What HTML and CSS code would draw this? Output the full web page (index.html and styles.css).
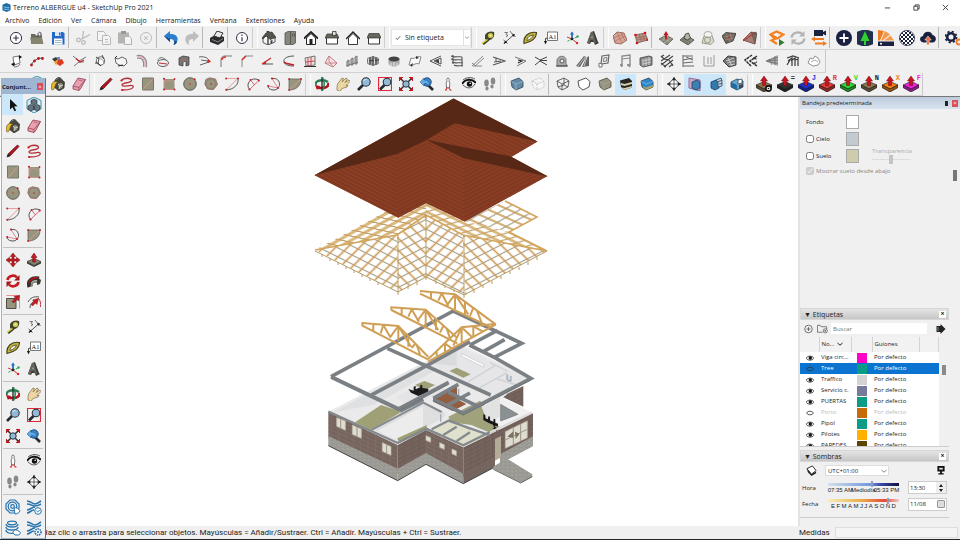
FILE: index.html
```html
<!DOCTYPE html>
<html lang="es">
<head>
    <meta charset="UTF-8">
    <title>Terreno ALBERGUE u4 - SketchUp Pro 2021</title>
    <link rel="stylesheet" href="styles.css">
</head>
<body>
    <!-- Icon set -->
    <svg class="sprite" aria-hidden="true">
        <symbol id="new" viewBox="0 0 14 14"><g fill="none" stroke="#33344a"><circle cx="7" cy="7" r="5.6" fill="#fff"/><path d="M7 4.2v5.6M4.2 7h5.6" stroke-width="1.2"/></g></symbol>
        <symbol id="open" viewBox="0 0 14 14"><path d="M1 3h4l1 1.500h6V13H1z" fill="#69695a"/><path d="M0 6.500h12l1.500 6.500H1.500z" fill="#85856f"/><path d="M8 6V3.500C8 1.500 10 .5 11 2v3" fill="none" stroke="#444"/></symbol>
        <symbol id="save" viewBox="0 0 14 14"><path d="M1 1h11l1.500 1.500V13.500H1z" fill="#2468c8"/><path d="M4 1h6v4H4z" fill="#dce8f8"/><path d="M8 1.500h1.500v3H8z" fill="#2468c8"/><path d="M3 7.500h8.500v6H3z" fill="#fff"/><path d="M4 9.500h6.500M4 11.500h6.500" stroke="#9bb"/></symbol>
        <symbol id="cut" viewBox="0 0 14 14"><g fill="none" stroke="#bcbcbc" stroke-width="1.300"><path d="M7.500 0l-1 8M14 3.500L4 9"/><circle cx="2.500" cy="9" r="1.800"/><circle cx="7.500" cy="11.500" r="1.800"/></g></symbol>
        <symbol id="copy" viewBox="0 0 14 14"><g fill="#f4f4f4" stroke="#b8b8b8"><path d="M.5.5h6l2 2v7h-8z"/><path d="M5.500 4.500h6l2 2v7h-8z"/><path d="M8 8.500h3M8 11h3" /></g></symbol>
        <symbol id="paste" viewBox="0 0 14 14"><path d="M0 1.500h11v11H0z" fill="#b4b4b0"/><path d="M3 0h5v3H3z" fill="#999"/><path d="M6.500 5.500h5l2 2v6h-7z" fill="#f4f4f4" stroke="#b0b0b0"/></symbol>
        <symbol id="del" viewBox="0 0 14 14"><g fill="none" stroke="#bdbdbd"><circle cx="7" cy="7" r="5.500"/><path d="M5 5l4 4M9 5l-4 4"/></g></symbol>
        <symbol id="undo" viewBox="0 0 14 14"><path d="M0 5l6-5v3c6 0 9 3 7 8-.5 1.500-2 2.500-3.500 3 2-4 0-6-3.500-6v3z" fill="#2a7fd0"/><path d="M0 5l6 3v3zM13 11c-.5 1.500-2 2.500-3.500 3 1.500-2.500 1-4 0-5z" fill="#16487c"/></symbol>
        <symbol id="redo" viewBox="0 0 14 14"><path d="M14 5L8 0v3C2 3-1 6 1 11c.5 1.500 2 2.500 3.500 3-2-4 0-6 3.500-6v3z" fill="#bdbdbd"/></symbol>
        <symbol id="print" viewBox="0 0 14 14"><path d="M0 7l6-3.500 8 2.500v4l-6 4-8-3z" fill="#2a2a2e"/><path d="M4 5l3-5 6 2-3 5z" fill="#e8e8e8" stroke="#333"/><path d="M2 8.500l6 2.500 5-3.500" stroke="#888" fill="none"/></symbol>
        <symbol id="info" viewBox="0 0 14 14"><circle cx="7" cy="7" r="5.500" fill="#fff" stroke="#33344a"/><path d="M7 6.200v4M7 3.600v1.300" stroke="#33344a" stroke-width="1.200"/></symbol>
        <symbol id="iso" viewBox="0 0 14 14"><path d="M1 6l5-1 0 9-5-2.500zM6 5l7 1v5l-7 3z" fill="#f2f2f2" stroke="#333" stroke-width=".8"/><path d="M0 7l4-5 1 0V0h2v1.500L10 1l4 5.500-6 2-3.500-4L1 8z" fill="#55554a" stroke="#222" stroke-width=".6"/><path d="M8.500 9.500l2-.5v3l-2 1z" fill="#444"/></symbol>
        <symbol id="top" viewBox="0 0 14 14"><path d="M2 2l3-1.500h7.500V12L10 13.500H2z" fill="#88877a" stroke="#444" stroke-width=".7"/><path d="M7.500 1v12M9.500 3h2v2h-2z" stroke="#444" fill="#b5b4a2" stroke-width=".7"/></symbol>
        <symbol id="front" viewBox="0 0 14 14"><path d="M2.500 7v6.500h9V7L7 2.500z" fill="#fff" stroke="#222"/><path d="M0 7.500l7-6.500 7 6.500" fill="none" stroke="#222" stroke-width="1.800"/><path d="M5.500 8h3v5.500h-3z" fill="#222"/></symbol>
        <symbol id="right" viewBox="0 0 14 14"><path d="M1.500 6.500h11v6.500h-11z" fill="#fff" stroke="#333"/><path d="M2 3h10l2 4H0z" fill="#66665c" stroke="#333" stroke-width=".7"/><path d="M7.500 .5h3.500v4H7.500z" fill="#ddd" stroke="#333" stroke-width=".8"/></symbol>
        <symbol id="back" viewBox="0 0 14 14"><path d="M2.500 7v6.500h9V7L7 2.500z" fill="#fff" stroke="#222" stroke-width=".9"/><path d="M0 8l7-7 7 7" fill="none" stroke="#222" stroke-width="1.400"/></symbol>
        <symbol id="left" viewBox="0 0 14 14"><path d="M1.500 6.500h11v6.500h-11z" fill="#fff" stroke="#333"/><path d="M2 2.500h10l2 4.500H0z" fill="#66665c" stroke="#333" stroke-width=".7"/></symbol>
        <symbol id="tape" viewBox="0 0 14 14"><path d="M4 4c2-4 7-4 9-3 1 4-1 7-4 8-2 1-4 0-5-1z" fill="#45452e"/><circle cx="9.500" cy="4.500" r="2.600" fill="#c9c64a"/><circle cx="9.500" cy="4.500" r="1.100" fill="#f6f3a0"/><path d="M7.500 8.500L2 13" stroke="#3a3a28" stroke-width="2.600"/><path d="M6.500 8.500L1 12.500" stroke="#e4dc3c" stroke-width="1.300"/></symbol>
        <symbol id="dim" viewBox="0 0 14 14"><path d="M2 13l2.500-3M3 11.500L11.500 4M1.500 9l4 3.500M9.500 2l4 4" fill="none" stroke="#444" stroke-width=".9"/><path d="M2.500 1.500h3l-1.500 2 2 1-2 1.500M8 0l1.500 2" fill="none" stroke="#555" stroke-width=".8"/><path d="M1.500 12.500l3.500-.7-1.500-2zM13 3l-3.200.8 1.800 2z" fill="#111"/></symbol>
        <symbol id="protractor" viewBox="0 0 14 14"><path d="M1 12.500C0 6 5 0 13.500 1.500 13.500 7 9 11 1 12.500z" fill="#c0b643" stroke="#45411c" stroke-width="1.100"/><path d="M4 9.500c0-3 2.500-5 6.500-5.500C9.500 7 7.500 8.500 4 9.500z" fill="#f2f0df" stroke="#45411c" stroke-width=".8"/></symbol>
        <symbol id="text" viewBox="0 0 14 14"><path d="M3.500 1h10v8.500h-10z" fill="#fff" stroke="#555" stroke-width=".8"/><path d="M3.500 7L1.500 7.500V11" fill="none" stroke="#333" stroke-width=".9"/><path d="M0 10h3l-1.500 3.500z" fill="#111"/><text x="4.600" y="7.500" font-family="Liberation Serif, serif" font-size="6.500" fill="#222">A1</text></symbol>
        <symbol id="axes" viewBox="0 0 14 14"><path d="M7 8l5.500-2M7 8l-5 2.500" stroke="#2a9a4a" stroke-dasharray="2 1"/><path d="M7 8V1.500" stroke="#2a6fc0" stroke-width="1.800"/><path d="M5 3.500l2-3 2 3z" fill="#2a6fc0"/><path d="M7 8l4.500 3.500M2 6l5 2" stroke="#c33"/><circle cx="12.500" cy="5.500" r="1.200" fill="#2fa055"/><circle cx="12" cy="12" r="1.200" fill="#d22"/><circle cx="7" cy="8" r="1.200" fill="#222"/></symbol>
        <symbol id="text3d" viewBox="0 0 14 14"><path d="M1 12l4-11 3-1 4 11 1 1-4 2-1-3H5l-1 2z" fill="#3c3c38"/><path d="M1 12l4-11h2l3 11-2 .5L7 9H4.500L3.500 13z" fill="#65655c"/><path d="M5.500 7h1l-.5-2z" fill="#eee"/></symbol>
        <symbol id="sand1" viewBox="0 0 14 14"><path d="M0 5l4-4 7 1 3 7-6 4-6-1z" fill="#dba393" stroke="#82584e" stroke-width=".8"/><path d="M1 7l9-4M2 10l10-5M4 2l5 10M8 1.500l4 8" stroke="#9a6a60" stroke-width=".6"/></symbol>
        <symbol id="sand2" viewBox="0 0 14 14"><path d="M1 4l10-2 3 7-11 3z" fill="#bd9384" stroke="#555" stroke-width=".7"/><path d="M2 7l10-2M3 9l10-2M5 3l3 8M8 2.500l3 7" stroke="#8a5f56" stroke-width=".6"/><g fill="#d11"><circle cx="1.500" cy="4" r="1.300"/><circle cx="11" cy="2" r="1.300"/><circle cx="3" cy="12" r="1.300"/><circle cx="13" cy="9" r="1"/></g></symbol>
        <symbol id="smoove" viewBox="0 0 14 14"><path d="M0 8l7-4 7 4-6 6z" fill="#8c8c7c" stroke="#555" stroke-width=".7"/><path d="M2.500 10l7-5M5 12l7-5M4 6l7 5" stroke="#bbb9a8" stroke-width=".7"/><path d="M6 8.500V4H4.500L7 0l2.500 4H8v4.500z" fill="#c41a22"/></symbol>
        <symbol id="stamp" viewBox="0 0 14 14"><path d="M0 9l6-5 8 5-6 5z" fill="#8c8c7c" stroke="#444" stroke-width=".8"/><path d="M4 7.500l1.500-4.500 3-1 2 5-3 2z" fill="#b6b5a4" stroke="#333" stroke-width=".8"/><path d="M2 8l6 4M4 6.500l6 5" fill="none" stroke="#555" stroke-width=".6"/></symbol>
        <symbol id="drape" viewBox="0 0 14 14"><path d="M3 5l-2 7 9 1.500 3-3-2-6z" fill="#dcdccc" stroke="#888877" stroke-width=".8"/><ellipse cx="7" cy="3.500" rx="4" ry="3" fill="#f4f4ee" stroke="#999" stroke-width=".8"/><circle cx="6.500" cy="9" r="3" fill="none" stroke="#888877" stroke-width=".8"/></symbol>
        <symbol id="detail" viewBox="0 0 14 14"><path d="M0 5l4-3.500 10 1L11 10l-7 2.500z" fill="#6c665c" stroke="#333" stroke-width=".8"/><path d="M2 6l10-2M3 9l9-2.500M4 2l4 9M8 2l2 8" stroke="#a98a7e" stroke-width=".7"/><circle cx="7" cy="6.500" r="1" fill="#c22"/></symbol>
        <symbol id="flip" viewBox="0 0 14 14"><path d="M0 9l8-8 6 1-2 11z" fill="#6b6b60" stroke="#333" stroke-width=".6"/><path d="M0 9l8-8 4 12z" fill="#a58175" stroke="#844" stroke-width=".6"/><path d="M13 1L0 10" stroke="#c22"/></symbol>
        <symbol id="wh" viewBox="0 0 16 16"><path d="M1.500 4.500l6-3 7 3-6 4z" fill="none" stroke="#f5821f" stroke-width="2.200"/><path d="M2 5l4 4-3.500 1.500L8 14" fill="none" stroke="#f5821f" stroke-width="2.200"/><path d="M10 9l5.500 3.500L10 16z" fill="#2c7a33"/></symbol>
        <symbol id="sync" viewBox="0 0 16 16"><g fill="none" stroke="#b2b2b2" stroke-width="2.200"><path d="M1.500 7.500C2 3.500 8 0 13 4.500M14.500 8.500C14 12.500 8 16 3 11.500"/></g><path d="M14.500 1v5.500H9zM1.500 15V9.500H7z" fill="#b2b2b2"/></symbol>
        <symbol id="send" viewBox="0 0 16 16"><path d="M3 0h9v6H3zM12 2l3-1.500v5L12 4z" fill="#1a2140"/><path d="M0 9l4-2.500V8h9v2H4v1.500zM16 13.500L12 16v-1.500H4v-2h8V11z" fill="#f07c22"/></symbol>
        <symbol id="plus" viewBox="0 0 16 16"><circle cx="8" cy="8" r="8" fill="#1a2140"/><path d="M8 3.500v9M3.500 8h9" stroke="#fff" stroke-width="1.800"/></symbol>
        <symbol id="tree" viewBox="0 0 16 16"><path d="M8 -1l9 3v12l-9 3-9-3V2z" fill="#22304e"/><path d="M8 1l4.500 10H9v4H7v-4H3.500z" fill="#2fd12f"/></symbol>
        <symbol id="fan" viewBox="0 0 16 16"><path d="M0 0l6 1-4 9.500H0z" fill="#f07c22"/><path d="M7 1l5 3.500-7.500 6H3zM12.500 5.500l3.500 5H6z" fill="#f39a4c"/><path d="M0 11.500h16V16H0z" fill="#1a2140"/><circle cx="3" cy="13.800" r="1" fill="#fff"/></symbol>
        <symbol id="ball" viewBox="0 0 16 16"><pattern id="checks" width="4" height="4" patternUnits="userSpaceOnUse"><path d="M0 0h4v4H0z" fill="#fff"/><path d="M0 0h2v2H0zM2 2h2v2H2z" fill="#1a2140"/></pattern><circle cx="8" cy="8" r="7.600" fill="url(#checks)" stroke="#1a2140" stroke-width=".7"/></symbol>
        <symbol id="cloud" viewBox="0 0 16 16"><path d="M3.500 12.500C-1 12-1 6.500 3 6c.5-5 8-6 9.500-1C17 6 17 12 12.500 12.500z" fill="#1a2140"/><path d="M6.800 15V10H4.800L8 6l3.200 4H9.200v5z" fill="#ee6a3a" stroke="#fff" stroke-width=".5"/></symbol>
        <symbol id="gear" viewBox="0 0 16 16"><circle cx="6" cy="7" r="3.800" fill="none" stroke="#1a2140" stroke-width="2.600"/><circle cx="6" cy="7" r="5.600" fill="none" stroke="#1a2140" stroke-width="1.600" stroke-dasharray="2.200 2.200"/><circle cx="14" cy="12" r="2.500" fill="none" stroke="#f07c22" stroke-width="1.800"/></symbol>

        <symbol id="p1" viewBox="0 0 14 14"><path d="M4 3l6-1 1 7-6 2z" fill="#fff" stroke="#555" stroke-width=".8"/><path d="M2 10l4-1.500-1 4zM13 3l-3-2v4z" fill="#111"/><path d="M5 13c3 0 5-1 6-3" fill="none" stroke="#777"/></symbol>
        <symbol id="p2" viewBox="0 0 14 14"><path d="M1 11l3-4 4-2.500L13 4" fill="none" stroke="#555"/><g fill="#b51820"><circle cx="1.500" cy="11" r="1.400"/><circle cx="4.500" cy="7" r="1.400"/><circle cx="8.500" cy="4.500" r="1.400"/><circle cx="12.500" cy="4.500" r="1.400"/></g></symbol>
        <symbol id="p3" viewBox="0 0 14 14"><path d="M1 5l4-2 3 3-4 2z" fill="#3a3a3a"/><path d="M3 8l4-3 2 3-4 3z" fill="#eba02d"/><path d="M7 6l4-1 2 4-4 3-3-2z" fill="#dc3a24"/><path d="M6 3h3v3H7z" fill="#5a8ac0"/></symbol>
        <symbol id="p4" viewBox="0 0 14 14"><path d="M1 2l6 5M14 3L7 7M2 12l5-4M12 8H7" stroke="#666" fill="none" stroke-width=".9"/><path d="M4 4.500l4 3.500 4-2" stroke="#c81e28" stroke-width="1.200" fill="none"/></symbol>
        <symbol id="p5" viewBox="0 0 14 14"><circle cx="7.500" cy="7" r="4.200" fill="#fff" stroke="#666"/><path d="M3 3l3 2-1 4 3 3M9 1l2 4M2 9h3" stroke="#333" fill="none" stroke-width=".9"/><path d="M6 4l4 2 1 4" fill="none" stroke="#999"/></symbol>
        <symbol id="p6" viewBox="0 0 14 14"><path d="M1 4l3 1 4-2 4 2 1 4-3 3-5-1-3-2z" fill="#f6f6f6" stroke="#555" stroke-width=".9"/><path d="M4 12l5-1M1 4l2-2" stroke="#222"/></symbol>
        <symbol id="p7" viewBox="0 0 14 14"><path d="M2 3c6-1 9 3 8 10" fill="none" stroke="#888" stroke-width="4"/><path d="M2 3c6-1 9 3 8 10" fill="none" stroke="#e4bcc2" stroke-width="2"/></symbol>
        <symbol id="p8" viewBox="0 0 14 14"><ellipse cx="7" cy="9" rx="5.500" ry="3.500" fill="#eee" stroke="#555" stroke-width=".9"/><path d="M2 7c0-4 5-5 9 0" fill="none" stroke="#777"/><path d="M3 9l8 1" stroke="#c22e3a"/></symbol>
        <symbol id="p9" viewBox="0 0 14 14"><path d="M2 11V4l4-2 6 1v8l-3 1V7L6 8v4z" fill="#7a7672" stroke="#333" stroke-width=".7"/><path d="M6 8c0-3 3-3 3-1" fill="none" stroke="#c66" /></symbol>
        <symbol id="p10" viewBox="0 0 14 14"><path d="M1 3c6-1 9 1 11 5M2 11l9-3M3 6l7 1" fill="none" stroke="#555" stroke-width=".9"/><path d="M10 5l3 3-4 1z" fill="#c22"/></symbol>
        <symbol id="p11" viewBox="0 0 14 14"><path d="M2 13V6c0-3 2-4 4-4h7" fill="none" stroke="#777"/><path d="M3 6c0-2 1-3 4-3" fill="none" stroke="#d33" stroke-width="1.600"/></symbol>
        <symbol id="p12" viewBox="0 0 14 14"><path d="M2 13V5l3-3h8M6 13" fill="none" stroke="#888"/><path d="M2 6l4-4" stroke="#d33" stroke-width="1.500"/></symbol>
        <symbol id="p13" viewBox="0 0 14 14"><path d="M1 10h11" stroke="#555"/><path d="M1 10l9-6" stroke="#c22" stroke-width="1.100"/><circle cx="4" cy="9" r="1.200" fill="#c22"/></symbol>
        <symbol id="p14" viewBox="0 0 14 14"><path d="M12 2C6 2 1 4 2 8c1 3 5 4 10 4" fill="none" stroke="#555"/><path d="M2 8c2 2 6 2 10 3" fill="none" stroke="#c81e28" stroke-width="1.600"/></symbol>
        <symbol id="p15" viewBox="0 0 14 14"><path d="M2 4l10-2v9l-9 1z" fill="#ecdede" stroke="#777"/><path d="M5 4v8M8 3v9M2 8l10-1" stroke="#c0404c" stroke-width=".9"/><path d="M1 12.500h12" stroke="#333"/></symbol>
        <symbol id="p16" viewBox="0 0 14 14"><path d="M1 9l4-7 8 7-4 4z" fill="#f6e4e7" stroke="#c4707a" stroke-width=".9"/><path d="M5 2v5l4 6M1 9l12 0" fill="none" stroke="#c4707a" stroke-width=".8"/></symbol>
        <symbol id="p17" viewBox="0 0 14 14"><path d="M2 7l2-1v6H2zM6 5l2-1v7H6zM10 3l2-1v8h-2z" fill="#bbb" stroke="#777"/><path d="M1 12l12-4" stroke="#777"/></symbol>
        <symbol id="p18" viewBox="0 0 14 14"><path d="M1 4l6-2 6 2v6l-6 2-6-2z" fill="#999"/><path d="M4 3v8M7 2v10M10 3v8M1 7l12-1" stroke="#333" stroke-width=".9"/><path d="M2.500 5v4M8.500 5v5" stroke="#ddd"/></symbol>
        <symbol id="p19" viewBox="0 0 14 14"><path d="M1.500 5v5c3 3.500 8 3.500 11 0V5z" fill="#aaa"/><ellipse cx="7" cy="5" rx="5.500" ry="2.600" fill="#444"/><path d="M4 9v3M7 8v5M10 9v3" stroke="#e6e6e6"/></symbol>
        <symbol id="p20" viewBox="0 0 14 14"><path d="M3 4c3 2 6-3 10-1l-2 7c-4-2-6 3-10 1z" fill="#fafafa" stroke="#777" stroke-width=".9"/><path d="M8 2l3 2-3 1zM4 13l-2-2 3-2z" fill="#333"/></symbol>
        <symbol id="p21" viewBox="0 0 14 14"><path d="M1 7l11-5M1 7l11 5M5 7l7-3v6z" fill="none" stroke="#555"/><path d="M6 6.500l4-1v4z" fill="#444"/></symbol>
        <symbol id="p22" viewBox="0 0 14 14"><path d="M1 2c4 2 7 0 11 1M1 5c4 2 7 0 11 1M2 8c4 2 7 0 11 1M4 11c3 2 6 0 9 1M3 1v9M12 3v9" fill="none" stroke="#555" stroke-width="1.100"/></symbol>
        <symbol id="p23" viewBox="0 0 14 14"><path d="M1 12L12 2M4 12l9-8M1 9l4 3M2 12h9" fill="none" stroke="#888"/></symbol>
        <symbol id="p24" viewBox="0 0 14 14"><path d="M1 3l12 4L1 11M2 8l7-1M4 4v3" fill="none" stroke="#555" stroke-width="1.100"/></symbol>
        <symbol id="p25" viewBox="0 0 14 14"><path d="M2 3l11 4-9 5" fill="none" stroke="#777"/><path d="M5 6l4 1-4 2" fill="none" stroke="#222" stroke-width="1.100"/></symbol>
        <symbol id="p26" viewBox="0 0 14 14"><path d="M1 3l5 3 7-3M1 11l5-4 7 4M6 6.500h7" fill="none" stroke="#444"/></symbol>
        <symbol id="p27" viewBox="0 0 14 14"><path d="M2 12V6c1-5 9-5 9 0v4l2 2z" fill="#aaa" stroke="#777"/><circle cx="7" cy="7" r="2" fill="#eee" stroke="#555"/><path d="M1 12h11" stroke="#444"/></symbol>
        <symbol id="p28" viewBox="0 0 14 14"><path d="M0 12L8 2l2 1-6 10zM6 13l4-9 3-2v10z" fill="#666"/><path d="M2 12l7-9M8 12l3-9" stroke="#bbb"/></symbol>
        <symbol id="p29" viewBox="0 0 14 14"><path d="M5 2l7-1-1 8-7 1z" fill="#eee" stroke="#666" stroke-width="1.200"/><path d="M7 4l3-.5-.5 3.500-3 .5zM2 9l3 1v3H2z" fill="#fff" stroke="#777"/></symbol>
        <symbol id="p30" viewBox="0 0 14 14"><path d="M4 12V2l8-1v10" fill="none" stroke="#888" stroke-width="1.300"/><path d="M4 5l8-1M2 11l2-1v3zM9 11l3-1v3z" fill="#999" stroke="#888"/></symbol>
        <symbol id="p31" viewBox="0 0 14 14"><path d="M1 4l9-2 3 1v8l-9 2-3-2z" fill="#888" stroke="#444" stroke-width=".8"/><path d="M4 5v7M7 4v8M10 3v8M4 7l8-2M4 10l8-2" stroke="#ccc"/></symbol>
        <symbol id="p32" viewBox="0 0 14 14"><path d="M1 3l3-2M1 7l9-6M1 11l12-9M4 13l9-7M9 13l4-3M1 2l3 3 5 1 4 6M1 9l5 4" stroke="#444" stroke-width="1.100" fill="none"/></symbol>
        <symbol id="p33" viewBox="0 0 14 14"><path d="M2 1v12M2 2h10M2 6l10-2M2 9l10-1M2 12h11M5 3l7 3" fill="none" stroke="#666"/></symbol>
        <symbol id="p34" viewBox="0 0 14 14"><path d="M2 2v10h10V1M6 3v7M9 3v7" fill="none" stroke="#999"/></symbol>
        <symbol id="p35" viewBox="0 0 14 14"><path d="M0 7l5-5 8 1v8l-7 2z" fill="#777" stroke="#333" stroke-width=".9"/><path d="M3 7l8-3M4 9l8-2M6 11l6-1M5 4l4 8" stroke="#ddd" stroke-width=".8"/></symbol>
        <symbol id="p36" viewBox="0 0 14 14"><path d="M8 1L1 6l6 6M13 2L6 7l7 5M9 4l4 1M9 10l4-2" fill="none" stroke="#333" stroke-width="1.500" stroke-dasharray="3 .6"/></symbol>
        <symbol id="p37" viewBox="0 0 14 14"><path d="M0 7l13-6v11z" fill="#aaa"/><path d="M1 7l12-4M2 7l11-1M2 7.500l11 2M4 5l3 6M10 2v9" stroke="#666" stroke-width=".7"/></symbol>
        <symbol id="p38" viewBox="0 0 14 14"><path d="M1 4l6-2 6 2M2 7l4-3v8M5 7l4-3v8M9 6l3-1v7M1 11l3-5" fill="none" stroke="#3a3a3a" stroke-width="1.200"/></symbol>
        <symbol id="p39" viewBox="0 0 14 14"><path d="M3 4l3 1 2-3 3 2 2 4-2 3-5 1-5-3z" fill="#fff" stroke="#888" stroke-width=".9"/><path d="M4 8l4-2 3 2" stroke="#aaa" fill="none"/></symbol>

        <symbol id="select" viewBox="0 0 14 14"><path d="M4 1v10.500l2.500-2.300 2 4 1.600-.8-1.900-3.800 3.300-.3z" fill="#111"/></symbol>
        <symbol id="group" viewBox="0 0 16 16"><path d="M8 0l7 3.500v8.500L8 16l-7-4V3.500z" fill="#dceef5" stroke="#3596b5"/><path d="M8 2l3 1.500v3L8 8 5 6.500v-3zM4.500 7.500L8 9v3.500L4.500 14 2 12V9zM11.500 7.500L14 9v3l-2.500 2L8 12.500V9z" fill="#65737c" stroke="#26343b" stroke-width=".7"/></symbol>
        <symbol id="bucket" viewBox="0 0 14 14"><path d="M4 3.500L8.500 1l5 4-.5 6-5 3-5-4z" fill="#46463c" stroke="#222" stroke-width=".6"/><path d="M.5 12c-1-6 2-9 7-7-3 0-3 4-4.500 7-.8 1.300-2.500 1-2.500 0z" fill="#e5b92e" stroke="#5a4a12" stroke-width=".6"/><path d="M7 7l3-1.500 2 2.500-1 3-3 1z" fill="#8e8d80"/><path d="M7 7l2 2 3-1M9 9l-1 3" stroke="#eee" stroke-width=".7" fill="none"/><path d="M4 3.500c1-3 5-4 7-1" stroke="#333" fill="none"/></symbol>
        <symbol id="eraser" viewBox="0 0 14 14"><path d="M1 9l5-8 7.500 1.500L9 11l-2 2.500-6-1.500z" fill="#e9a0b0" stroke="#8e3a4b" stroke-width=".8"/><path d="M1 9l6 1.500 6.500-8M7 10.500V13.500" stroke="#8e3a4b" stroke-width=".7" fill="none"/><path d="M6.500 3l4 .8" stroke="#b56a7a"/></symbol>
        <symbol id="pencil" viewBox="0 0 14 14"><path d="M1.500 12.500l1-3L11.500 1l1.500 1.500L4.500 11.500z" fill="#b3141f" stroke="#51090e" stroke-width=".7"/><path d="M.5 13.500l1.500-4 2.500 2.500z" fill="#222"/></symbol>
        <symbol id="freehand" viewBox="0 0 14 14"><path d="M1.500 3.500c2-3 10-3 10 0S2 5 2 8s10-1 11 1-2 4-11 4" fill="none" stroke="#b3303a" stroke-width="1.300"/><circle cx="1.500" cy="3.500" r="1.100" fill="#d11"/><circle cx="2" cy="13" r="1" fill="#d11"/></symbol>
        <symbol id="rect" viewBox="0 0 14 14"><path d="M1.500 1h11v12h-11z" fill="#98957f" stroke="#77756a"/><path d="M2 12.500L12 1.500" stroke="#d69a8c"/></symbol>
        <symbol id="rotrect" viewBox="0 0 14 14"><path d="M2 2h10.500v10.500H2z" fill="#98957f"/><path d="M2 1.500v11h11M2 6c3-4 7-4 10 1" fill="none" stroke="#c9948a"/><g fill="#c22030"><circle cx="2" cy="1.800" r="1"/><circle cx="2" cy="12.500" r="1"/><circle cx="12.500" cy="12.500" r="1"/><circle cx="12.500" cy="2" r=".9"/></g></symbol>
        <symbol id="circle" viewBox="0 0 14 14"><circle cx="7" cy="7" r="6.300" fill="#98957f" stroke="#55534b" stroke-width=".9"/><path d="M7 7l4.500-4.500" stroke="#c9948a" stroke-width=".7"/><circle cx="7" cy="7" r=".8" fill="#c22030"/><circle cx="11.700" cy="2.300" r="1" fill="#c22030"/></symbol>
        <symbol id="polygon" viewBox="0 0 14 14"><path d="M5.500.8l6 1.200 2 5.500-4 5-6-.5L.8 7l1-4.500z" fill="#98957f" stroke="#a06a62" stroke-width=".9"/><circle cx="7" cy="7" r="5" fill="none" stroke="#77756a" stroke-width=".6"/><circle cx="7" cy="7" r=".8" fill="#c22030"/></symbol>
        <symbol id="arc" viewBox="0 0 14 14"><path d="M13 1.500c1 6-4 11-12 11.500" fill="none" stroke="#555"/><path d="M1 1.500h12L1 13" fill="none" stroke="#dd8a92" stroke-width=".8"/><g fill="#c22030"><circle cx="1.200" cy="1.500" r="1"/><circle cx="13" cy="1.500" r="1"/><circle cx="1.200" cy="12.800" r="1"/></g></symbol>
        <symbol id="arc2" viewBox="0 0 14 14"><path d="M3.500 12.500C-1 7 5-1 13 3" fill="none" stroke="#555"/><path d="M3.500 12.500L13 3.500M4.500 3l4 5" stroke="#d2606a" stroke-width=".9"/><g fill="#c22030"><circle cx="3.500" cy="12.500" r="1.100"/><circle cx="12.800" cy="3.500" r="1.100"/><circle cx="4.500" cy="3" r="1"/></g></symbol>
        <symbol id="arc3" viewBox="0 0 14 14"><path d="M6 1.500c8-1 9 11 1 11.500-3 0-5-1-6-3" fill="none" stroke="#555"/><path d="M5 1.500l6 9.500M1 9l10 2" stroke="#dd8a92"/><g fill="#c22030"><circle cx="5" cy="1.500" r="1.100"/><circle cx="1.200" cy="9" r="1.100"/><circle cx="11" cy="11" r="1.100"/></g></symbol>
        <symbol id="pie" viewBox="0 0 14 14"><path d="M1 2h12c0 7-5 11-12 11z" fill="#98957f" stroke="#66645a" stroke-width=".8"/><path d="M1 13L13 2" stroke="#d69a8c"/><circle cx="1.200" cy="2" r="1" fill="#c22030"/><circle cx="13" cy="2" r="1" fill="#c22030"/><circle cx="1.200" cy="13" r="1" fill="#c22030"/></symbol>
        <symbol id="move" viewBox="0 0 14 14"><path d="M7 0l2.800 3.500H8v2.500h2.500V4.200L14 7l-3.500 2.800V8H8v2.500h1.800L7 14l-2.800-3.500H6V8H3.500v1.800L0 7l3.500-2.800V6H6V3.500H4.200z" fill="#c41a22" stroke="#6e0d12" stroke-width=".5"/></symbol>
        <symbol id="push" viewBox="0 0 14 14"><path d="M0 8.500l7-3 7 3-7 4z" fill="#83816d" stroke="#333" stroke-width=".6"/><path d="M0 8.500v2L7 14l7-3.500v-2l-7 4z" fill="#3e3d35"/><path d="M5.700 9V4.500H4L7 0l3 4.500H8.300V9z" fill="#c41a22" stroke="#6e0d12" stroke-width=".5"/></symbol>
        <symbol id="rotate" viewBox="0 0 14 14"><path d="M1.500 6C2 2 8 0 11 3.500M12.500 8c-.5 4-6.500 6-9.500 2.500" fill="none" stroke="#c41a22" stroke-width="2.600"/><path d="M13.500 1v5.500H8zM.5 13V7.500H6z" fill="#a3151c"/></symbol>
        <symbol id="follow" viewBox="0 0 14 14"><path d="M2.500 13c-2-6 2-10 9.500-8.500" fill="none" stroke="#33312b" stroke-width="4"/><path d="M5 12.500c-1-4 2-6 7-4" fill="none" stroke="#8a887b" stroke-width="2"/><path d="M2 9c1.500-4 5-5.500 9-5" fill="none" stroke="#b3141f" stroke-width="1.600"/><path d="M10 3l4 3-1 4-3 1z" fill="#3a3832"/></symbol>
        <symbol id="scale" viewBox="0 0 14 14"><path d="M.5 3.500H10V13.500H.5z" fill="#98957f" stroke="#4f4d45"/><path d="M.5.5h13v13" fill="none" stroke="#e9707a" stroke-width=".8"/><path d="M6 6.500l3.500-3.500L8 1.500l5.500-1-1 5.500L11 4.500 7.500 8z" fill="#c41a22" stroke="#6e0d12" stroke-width=".5"/></symbol>
        <symbol id="offset" viewBox="0 0 14 14"><path d="M1 7C3 3 7 1 12 2M3 13c0-4 2-6 5-7" fill="none" stroke="#555"/><path d="M11 3c2.500 2 3 6 2.500 9" stroke="#c22030" fill="none" stroke-width=".9"/><path d="M4 9.500l3-3-1.500-1.500 6-1.500-1.500 6L8.500 8l-3 3z" fill="#c41a22" stroke="#6e0d12" stroke-width=".4"/></symbol>
        <symbol id="orbit" viewBox="0 0 14 14"><path d="M1 8C-1 3 9 2 13 5" fill="none" stroke="#2b7f56" stroke-width="2.300"/><path d="M13 6c2 5-7 6-11 4" fill="none" stroke="#b3141f" stroke-width="2.600"/><path d="M7 0v14" stroke="#222" stroke-width="1.300"/><path d="M7 0c3 3 3 11 0 14" fill="none" stroke="#2b7f56" stroke-width="1.500"/><path d="M0 8l5 1-3 4z" fill="#b3141f"/></symbol>
        <symbol id="pan" viewBox="0 0 14 14"><path d="M1 13c0-4 0-6 2-8l3-4 1.500.5L6 5l4-4 1.500 1L9 5.500 13 3l1 1.500-4 4 2 0-1 1.500-5 1.500-2 3z" fill="#ecd6a4" stroke="#8a774e" stroke-width=".8"/></symbol>
        <symbol id="zoom" viewBox="0 0 14 14"><path d="M1 13l5-5" stroke="#222a33" stroke-width="2.600"/><circle cx="9" cy="5" r="4.200" fill="#94b9d6" stroke="#26323d" stroke-width="1.100"/><path d="M6.800 4c.5-1.200 1.500-1.700 2.700-1.500" fill="none" stroke="#e9f5fd"/></symbol>
        <symbol id="zoomwin" viewBox="0 0 14 14"><path d="M.5 .5h13v13H.5z" fill="none" stroke="#e02a3a" stroke-width="1.200"/><path d="M2 12.500l5-5" stroke="#222a33" stroke-width="2.600"/><circle cx="9" cy="5" r="3.800" fill="#94b9d6" stroke="#26323d" stroke-width="1.100"/></symbol>
        <symbol id="extents" viewBox="0 0 14 14"><path d="M0 0h4L0 4zM14 0v4l-4-4zM0 14v-4l4 4zM14 14h-4l4-4z" fill="#c41a22" stroke="#c41a22"/><path d="M2 2l3 3M12 2L9 5M2 12l3-3M12 12L9 9" stroke="#333" stroke-width="1.500"/><circle cx="7" cy="7" r="3.200" fill="#94b9d6" stroke="#26323d"/></symbol>
        <symbol id="prev" viewBox="0 0 14 14"><path d="M8 8l5 5" stroke="#222a33" stroke-width="2.600"/><circle cx="7" cy="5" r="4.200" fill="#3c86c8" stroke="#1d4e80"/><path d="M0 5l4-4v2c4 0 6 2 5 6-1-2-3-3-5-2v2z" fill="#5fa9e4" stroke="#1d4e80" stroke-width=".5"/></symbol>
        <symbol id="camera" viewBox="0 0 14 14"><path d="M7 1c1.500 0 1.500 2.500.8 3 1.200 1 1.200 4 .7 5v2h-3V9c-.5-1-.5-4 .7-5C5.500 3.500 5.500 1 7 1z" fill="#fff" stroke="#555" stroke-width=".8"/><path d="M4.500 13l2-2.500M9.500 13l-2-2.500M4 13h2M8.500 13h2" stroke="#d22"/></symbol>
        <symbol id="look" viewBox="0 0 14 14"><path d="M0 7c3-5 10-6 14-1" fill="none" stroke="#111" stroke-width="2"/><path d="M1 8c4 4 9 4 12-1" fill="none" stroke="#444" stroke-width=".9"/><circle cx="7.500" cy="7" r="2.700" fill="#111"/><circle cx="8.200" cy="6.300" r=".8" fill="#fff"/><path d="M1 3c4-3 8-3 12-1" fill="none" stroke="#555"/></symbol>
        <symbol id="walk" viewBox="0 0 14 14"><g fill="#888"><ellipse cx="3.500" cy="6" rx="2.300" ry="3.600"/><ellipse cx="4" cy="11.500" rx="1.600" ry="1.900"/><ellipse cx="10" cy="4" rx="2.300" ry="3.600"/><ellipse cx="9" cy="9.500" rx="1.600" ry="1.900"/></g></symbol>
        <symbol id="section" viewBox="0 0 14 14"><circle cx="7" cy="7" r="4.200" fill="#fff" stroke="#444" stroke-width=".9"/><path d="M0 7h14M7 0v14" stroke="#444" stroke-width=".8"/><path d="M7 0l2 3H5zM7 14l2-3H5zM0 7l3-2v4zM14 7l-3-2v4z" fill="#222"/></symbol>
        <symbol id="xray" viewBox="0 0 14 14"><path d="M1 4l8-3 4 3.500L13 10l-7 3-4-3z" fill="#648ba5" stroke="#2e4454" stroke-width=".8"/><path d="M1 4l5 3 7-2.500M6 7v6" stroke="#9fc0d4" stroke-width=".7" fill="none"/></symbol>
        <symbol id="backedge" viewBox="0 0 14 14"><path d="M1 4l8-3 4 3.500L13 10l-7 3-4-3zM1 4l5 3 7-2.500M6 7v6" fill="#f7f7f7" stroke="#bbb" stroke-width=".8" stroke-dasharray="2 1"/></symbol>
        <symbol id="wire" viewBox="0 0 14 14"><path d="M1 4l7-3 5 3-1 6-6 3-4-3zM1 4l5 3 7-3M6 7v6M8 1v7l4 2M2 10l6-2" fill="none" stroke="#444" stroke-width=".8"/></symbol>
        <symbol id="hidden" viewBox="0 0 14 14"><path d="M1 4l8-3 4 3.500L12 10l-6 3-4-3z" fill="#fff" stroke="#444" stroke-width=".9"/></symbol>
        <symbol id="shaded" viewBox="0 0 14 14"><path d="M1 4l8-3 4 3.500L13 10l-7 3-4-3z" fill="#979481" stroke="#4b4a40" stroke-width=".8"/><path d="M1 4l5 3 7-2.500M6 7v6" stroke="#aaa897" stroke-width=".7" fill="none"/></symbol>
        <symbol id="textured" viewBox="0 0 14 14"><path d="M1 3.500L10 1l3 3v6.500L5.500 13 2 10z" fill="#26261f"/><path d="M2 6l3.500 1L13 5v2L5.500 9 2 8zM3 10.500l2.500.5 7.500-2v1.500L5.500 13z" fill="#d8cfae"/></symbol>
        <symbol id="mono" viewBox="0 0 14 14"><path d="M1 4l8-3 4 3.500L13 10l-7 3-4-3z" fill="#2f86c8" stroke="#2a3c46" stroke-width=".8"/><path d="M2 9l4 4 7-3V8L6 10.500z" fill="#b3a25f"/><path d="M1 4l5 3 7-2.500" stroke="#7fc3ee" stroke-width=".7" fill="none"/></symbol>
        <symbol id="plane" viewBox="0 0 14 14"><path d="M1 1l11 2v11L1 11z" fill="#d7a6ba" stroke="#8c6c9e"/><path d="M4 5l5-2 3 2v6l-4 2-4-2z" fill="#3c7fb0" stroke="#1d4566" stroke-width=".8"/></symbol>
        <symbol id="cutd" viewBox="0 0 14 14"><path d="M2 5l5-2 3 2v6l-4 2-4-2z" fill="#2f7bb0" stroke="#143f5e" stroke-width=".8"/><path d="M7 3l5-2 1 3v5l-4 1V5z" fill="#c0d9e4" stroke="#345" stroke-width=".8"/><path d="M9 4.500l4-1M10 7l3-.5" stroke="#222" stroke-width=".7"/></symbol>
        <symbol id="cutf" viewBox="0 0 14 14"><path d="M1 5l6-3 6 2v6l-6 3-6-3z" fill="#66a9cf" stroke="#1d4566" stroke-width=".8"/><path d="M1 5l6 3v5l-6-3z" fill="#246b9c"/><path d="M8 3l4-1v4l-4 1z" fill="#fff" stroke="#333" stroke-width=".7"/><path d="M9 8l4-1v3l-4 2z" fill="#445"/></symbol>
        <symbol id="pad" viewBox="0 0 16 16"><path d="M0 9l8-3.500L16 9l-8 4z" fill="currentColor" stroke="#222" stroke-width=".6"/><path d="M0 9v2.500L8 16l8-4.500V9l-8 4z" fill="currentColor" stroke="#222" stroke-width=".7"/><path d="M0 9v2.500L8 16l8-4.500V9l-8 4z" fill="#000" opacity=".35"/><path d="M6.500 9.500V5H4.500L8 0l3.500 5H9.500v4.500z" fill="#c8141e" stroke="#6e0d12" stroke-width=".5"/></symbol>
        <symbol id="padcog" viewBox="0 0 16 16"><use href="#pad"/><circle cx="12.500" cy="12.500" r="2.600" fill="#fff" stroke="#111" stroke-width="1.600"/><circle cx="12.500" cy="12.500" r=".8" fill="#111"/></symbol>
        <symbol id="geo1" viewBox="0 0 16 16"><g fill="none" stroke="#2673ad" stroke-width="1.200"><path d="M5 1h5l4 4v5l-4 4H5L1 10V5z"/><circle cx="7.500" cy="7.500" r="4.300"/><circle cx="7.500" cy="7.500" r="1.800"/></g><path d="M9 9c2-1 5 1 6 3-1 2-3 3-5 3z" fill="#fff" stroke="#2673ad"/></symbol>
        <symbol id="geo2" viewBox="0 0 16 16"><path d="M1 2c4 0 5 3 8 3s4-2 6-3M1 5c4 0 5 2 8 2s4-1 6-2M1 11c3 0 5-3 8-3M1 14c3 0 4-3 7-3" fill="none" stroke="#2673ad" stroke-width="1.600"/><circle cx="12" cy="12" r="3.300" fill="#fff" stroke="#2673ad"/><path d="M10.500 12l1.200 1 2-2" fill="none" stroke="#2673ad"/></symbol>
        <symbol id="geo3" viewBox="0 0 16 16"><g fill="none" stroke="#2673ad" stroke-width="1.300"><ellipse cx="7" cy="3" rx="4.500" ry="1.800"/><path d="M1 4c0 4 12 4 12 0M1 7c0 4 12 4 12 0M1 10c0 3 5 4 8 3"/></g><path d="M8 13c0-3 3-4 5-2 3 0 3 4 0 4h-3z" fill="#fff" stroke="#2673ad"/></symbol>
        <symbol id="geo4" viewBox="0 0 16 16"><path d="M1 2c4 0 5 3 8 3s4-2 6-3M1 5c4 0 5 2 8 2s4-1 6-2M1 11c3 0 5-3 8-3M1 14c3 0 4-3 7-3" fill="none" stroke="#2673ad" stroke-width="1.600"/><circle cx="12" cy="12" r="3" fill="#fff" stroke="#2673ad" stroke-width="1.600" stroke-dasharray="1.500 .7"/><circle cx="12" cy="12" r="1" fill="#2673ad"/></symbol>

        <symbol id="eye" viewBox="0 0 8 6"><path d="M0 3.200C2 .4 6 .4 8 3.200 6 5.800 2 5.800 0 3.200z" fill="#fff" stroke="#222" stroke-width=".8"/><circle cx="4.300" cy="3" r="1.700" fill="#111"/></symbol>
        <symbol id="eye-off" viewBox="0 0 8 6"><path d="M.5 3C2 .6 6 .6 7.500 3 6 5.400 2 5.400.5 3z" fill="none" stroke="#333" stroke-width=".8"/></symbol>
        <symbol id="chevron" viewBox="0 0 8 6"><path d="M1.500 2L4 4.200 6.500 2" fill="none" stroke="currentColor"/></symbol>
    </svg>

    <!-- Title bar -->
    <header class="titlebar">
        <svg class="logo" viewBox="0 0 10 10"><path d="M5 0l4.500 2v6L5 10 .5 8V2z" fill="#1c6ba5"/><path d="M2 4c2 2 4 0 6 1M2 6.500c2 1.500 4 0 6 .5" fill="none" stroke="#9fd0ee"/></svg>
        <h1>Terreno ALBERGUE u4 - SketchUp Pro 2021</h1>
        <div class="window-buttons">
            <button aria-label="Minimizar"><svg viewBox="0 0 8 8"><path d="M1 4.500h6"/></svg></button>
            <button aria-label="Restaurar"><svg viewBox="0 0 8 8"><path d="M1 2.500h4.500V7H1zM2.500 2.500V1H7v4.500H5.500"/></svg></button>
            <button aria-label="Cerrar"><svg viewBox="0 0 8 8"><path d="M1 1l6 6M7 1L1 7"/></svg></button>
        </div>
    </header>

    <!-- Menu -->
    <nav class="menu">
        <a href="#">Archivo</a>
        <a href="#">Edición</a>
        <a href="#">Ver</a>
        <a href="#">Cámara</a>
        <a href="#">Dibujo</a>
        <a href="#">Herramientas</a>
        <a href="#">Ventana</a>
        <a href="#">Extensiones</a>
        <a href="#">Ayuda</a>
    </nav>

    <!-- Toolbars -->
    <div class="toolbars">
        <div class="toolbar">
            <div class="tools" data-tools="new open save | cut copy paste del | undo redo | print | info || iso top front right back left ||"></div>
            <div class="tag-select">
                <svg viewBox="0 0 8 8"><path d="M1 4l2 2 4-4.500" fill="none" stroke="#333"/></svg>
                <select aria-label="Etiqueta activa"><option>Sin etiqueta</option></select>
                <svg class="arrow"><use href="#chevron"/></svg>
            </div>
            <div class="tools" data-tools="|| tape dim protractor text axes text3d || sand1 sand2 | smoove stamp drape detail flip || wh sync send | plus tree fan ball cloud | gear"></div>
        </div>
        <div class="toolbar toolbar-short">
            <div class="tools" data-tools="p1 p2 p3 p4 p5 p6 p7 p8 p9 p10 p11 p12 p13 p14 p15 p16 p17 p18 p19 p20 p21 p22 p23 p24 p25 p26 p27 p28 p29 p30 p31 p32 p33 p34 p35 p36 p37 p38 p39"></div>
        </div>
        <div class="toolbar toolbar-short">
            <div class="tools" data-tools="select group bucket eraser || pencil freehand rect rotrect circle polygon arc arc2 arc3 pie || orbit pan zoom zoomwin extents prev camera look walk || xray backedge | wire hidden shaded textured* mono || section plane* cutd* cutf || padcog:brown pad:black:= pad:blue:J pad:red:R pad:green:V pad:brown:N pad:orange:X pad:magenta:F"></div>
        </div>
    </div>

    <main class="workspace">
        <!-- Model view -->
        <section class="viewport">
            <svg viewBox="0 97 798 429" role="img" aria-label="Modelo 3D del albergue">
                <defs>
                    <pattern id="tileA" width="4" height="4" patternUnits="userSpaceOnUse" patternTransform="skewY(27)"><path d="M0 0h4v4H0z" fill="#8a3f25"/><path d="M0 1h4" stroke="#813820" stroke-width="2"/></pattern>
                    <pattern id="tileB" width="4" height="4" patternUnits="userSpaceOnUse" patternTransform="skewY(-27)"><path d="M0 0h4v4H0z" fill="#883d24"/><path d="M0 1h4" stroke="#803820" stroke-width="2"/></pattern>
                    <pattern id="gridA" width="1" height="1" patternUnits="userSpaceOnUse" patternTransform="matrix(8 4 6 -6 315 250)"><path d="M0 .5h1" stroke="#9c967d" stroke-width=".13"/><path d="M.5 0v1" stroke="#cfa463" stroke-width=".2"/></pattern>
                    <pattern id="gridB" width="1" height="1" patternUnits="userSpaceOnUse" patternTransform="matrix(8 -4 6 6 398 292)"><path d="M0 .5h1" stroke="#9c967d" stroke-width=".13"/><path d="M.5 0v1" stroke="#cfa463" stroke-width=".2"/></pattern>
                    <pattern id="gridC" width="1" height="1" patternUnits="userSpaceOnUse" patternTransform="matrix(8 -4.500 9 2 315 250)"><path d="M0 .5h1" stroke="#dab87e" stroke-width=".5"/><path d="M.5 0v1" stroke="#c5a269" stroke-width=".2"/></pattern>
                    <pattern id="gridD" width="1" height="1" patternUnits="userSpaceOnUse" patternTransform="matrix(8 4 9 -2.500 426 215)"><path d="M0 .5h1" stroke="#dab87e" stroke-width=".45"/><path d="M.5 0v1" stroke="#c5a269" stroke-width=".2"/></pattern>
                    <pattern id="gridE" width="1" height="1" patternUnits="userSpaceOnUse" patternTransform="matrix(9 4 9 -5 470 215)"><path d="M0 .5h1" stroke="#d3ad6e" stroke-width=".25"/><path d="M.5 0v1" stroke="#a49d84" stroke-width=".14"/></pattern>
                    <pattern id="brick" width="22" height="26" patternUnits="userSpaceOnUse" patternTransform="skewY(24)"><path d="M0 0h22v26H0z" fill="#75645d"/><path d="M0 4h22M0 17h22M6 0v26" stroke="#7e6d66" stroke-width="3"/></pattern>
                    <pattern id="brickR" width="22" height="26" patternUnits="userSpaceOnUse" patternTransform="skewY(-26)"><path d="M0 0h22v26H0z" fill="#75645d"/><path d="M0 4h22M0 17h22M6 0v26" stroke="#6d5c55" stroke-width="3"/></pattern>
                    <pattern id="stone" width="13" height="11" patternUnits="userSpaceOnUse"><path d="M0 0h13v11H0z" fill="#a09e99"/><path d="M0 3l5 2 3-4 5 3M2 11l3-6 5 5 3-3" fill="none" stroke="#8a8883" stroke-width="1.500"/><path d="M9 8h3M1 8h2" stroke="#b9b7b2" stroke-width="2"/></pattern>
                </defs>

                <!-- Roof frame -->
                <g>
                    <path d="M315 250l70-38 41-22v25l-29 20z" fill="url(#gridC)"/>
                    <path d="M464 221l41-20 32 16-28 15z" fill="url(#gridE)"/>
                    <path d="M426 203l38 18 45 11 38 19-84-16-37-20z" fill="url(#gridD)"/>
                    <path d="M315 250l82-15 1 57z" fill="url(#gridA)"/>
                    <path d="M397 235l29-20v62l-28 15z" fill="url(#gridB)"/>
                    <path d="M426 215l37 20 1 60-38-18z" fill="url(#gridA)"/>
                    <path d="M463 235l84 16-82 44z" fill="url(#gridB)"/>
                    <path d="M315 250l82-15 29-20 37 20 84 16M505 201l32 16-28 15 38 19" fill="none" stroke="#d3a55c" stroke-width="1.600"/>
                    <path d="M315 251l83 41 28-15 38 18 83-44" fill="none" stroke="#b19a6c"/>
                    <path d="M398 235v60M426 215v65M464 235v63" stroke="#b5975c" stroke-width=".9"/>
                    <path d="M322 254v3m8 1v3m8 1v3m8 1v3m8 1v3m8 1v3m8 1v3m8 1v3M408 286v3m9-7v3M436 281v3m9 1v3m9 1v3M474 290v3m9-8v3m9-7v3m9-8v3m9-8v3m9-7v3m9-8v3m9-8v3" stroke="#c09a58"/>
                </g>

                <!-- Roof tiles -->
                <g>
                    <path d="M314.500 175.300L453.500 98.500l84 43-26.800 15 36.600 19.500-82.600 45.500-38.700-18.500-28 14.500z" fill="#873d23"/>
                    <path d="M314.500 175l82.500-21 1 63.500z" fill="url(#tileA)"/>
                    <path d="M397 154l29.500-15V203l-28.500 15z" fill="url(#tileB)"/>
                    <path d="M426 140l38 18 1 63.500-39-18.500z" fill="url(#tileA)"/>
                    <path d="M463 157l84.500 19-82.800 45.500z" fill="url(#tileB)"/>
                    <path d="M426 141l28.500-18.500 83 19-27 16z" fill="url(#tileA)"/>
                    <path d="M314.500 175.300L453.500 98.500l84 43-83-18.200L426 140.300 397 154z" fill="#582817"/>
                    <path d="M426 139.800l84.700 16.700 36.800 20L463 158z" fill="#582817"/>
                </g>

                <!-- House -->
                <g transform="translate(300 285) scale(.3333)">
                    <path d="M85 380l310-160 80-45 220 105-85 60 89 45-210 102-115-52-82 40z" fill="#eaeaeb"/>
                    <path d="M625 325l45-22v62l-60-28z" fill="url(#brickR)"/>
                    <path d="M85 380l208 100v85L85 460z" fill="url(#brick)"/>
                    <path d="M293 480l85-45v85l-85 48z" fill="url(#brickR)"/>
                    <path d="M378 435l112 52v88l-112-55z" fill="url(#brick)"/>
                    <path d="M490 487l209-102v75L490 575z" fill="url(#brickR)"/>
                    <path d="M85 453l208 98v36L85 482z" fill="url(#stone)"/>
                    <path d="M293 551l85-47v33l-85 50z" fill="url(#stone)"/>
                    <path d="M378 504l112 62v30l-112-58z" fill="url(#stone)"/>
                    <path d="M490 566l95-52v32l-95 50z" fill="#74655e"/>
                    <path d="M600 508l99-54v30l-99 52z" fill="url(#stone)"/>
                    <path d="M85 482l208 105 85-49 112 58 95-50" fill="none" stroke="#444" stroke-width="3"/>
                    <path d="M580 545l40-25 77 48v8l-35 18-82-42z" fill="url(#stone)"/>
                    <path d="M580 553l82 41 35-19" fill="none" stroke="#6c6a66" stroke-width="3"/>

                    <!-- Rooms on the left -->
                    <path d="M100 382l270-145 40 18-190 105z" fill="#dfe0e1"/>
                    <path d="M165 412l78-52 62 20-92 55z" fill="#a0a077"/>
                    <path d="M222 435l150-82 62 30v12l-50 28-92 45z" fill="#dcdddf"/>
                    <path d="M232 438l138-75v62l-82 40z" fill="#ececed"/>
                    <path d="M370 363l60 30-48 28-12-6z" fill="#dddfe0"/>
                    <path d="M292 460l88-40v14l-82 40z" fill="#a0a077"/>
                    <path d="M290 335l90-48 62 28-120 52z" fill="#e4e4e6"/>
                    <path d="M345 300l28-12 32 12-30 16z" fill="#a0a077"/>
                    <path d="M325 312l16 5v-12l6-2v10l14-6v-8l6 2v8l18 2v10l-30 12-22-10z" fill="#1b1b1b"/>

                    <!-- Rooms on the right -->
                    <path d="M385 235l88-52 208 95-92 50-115-50z" fill="#e6e6e8"/>
                    <path d="M470 185v58l-80-8z" fill="#dadbdd"/>
                    <path d="M448 258l22-10 42 20-22 10z" fill="#a0a077"/>
                    <path d="M485 206l66 32v8l-66-32z" fill="#fff" stroke="#c4c5c8" stroke-width="2"/>
                    <path d="M505 290l80-48M540 308l82-46M570 232l52 26M592 282l60 18" stroke="#cfd1d4" stroke-width="4"/>
                    <path d="M621 268v16l12 5v-16" fill="#d5dbe2" stroke="#8e9cac" stroke-width="3"/>
                    <path d="M400 340l72-40v28l26 30-40 20-58-28z" fill="#935d3f"/>
                    <path d="M474 298v42l22 12" fill="none" stroke="#dcdcdd" stroke-width="6"/>
                    <path d="M445 395l95-48 30 26v36l34 16-30 20-60-25-60-8z" fill="#a0a27c"/>
                    <path d="M545 365l55-30 92 46-90 46-40-22z" fill="#f0f0f1"/>
                    <path d="M545 365l55-30v60l-35 18z" fill="#e2e2e3"/>
                    <path d="M602 358l52 30-52 20z" fill="#8b9093" stroke="#6e7376" stroke-width="2"/>
                    <path d="M550 388l6 2v10l8 3 1-9 5 1v11l10 4 1-9 5 2v10l8 3v8l-8-2-3 6-4-9-14-6-15-8zM578 430l8-4 10 6-6 6z" fill="#181818"/>
                    <path d="M395 433l50-26 120 44-75 36z" fill="#e0e1cc"/>
                    <path d="M430 450l40-25M470 468l40-26M445 405l65 26M395 433l50-26 125 44" fill="none" stroke="#858a8f" stroke-width="7"/>
                    <path d="M422 388v22M476 312v30" stroke="#9fabba" stroke-width="4"/>
                    <path d="M85 380l208 94 85-43 112 50 80-40" fill="none" stroke="#83888d" stroke-width="7"/>
                    <path d="M570 442l127-60" stroke="#dcdcdc" stroke-width="6"/>
                    <path d="M215 435l155-82 55 28" fill="none" stroke="#858a8f" stroke-width="6"/>

                    <!-- Windows and door -->
                    <g fill="#dfdcd2" stroke="#c0b9a6" stroke-width="2">
                        <path d="M110 398l26 10v28l-26-12zM157 420l27 12v28l-27-12zM247 473l26 12v26l-26-12zM378 452l14 6v14l-14-6zM419 473l14 6v14l-14-6zM456 492l13 6v14l-13-6z"/>
                        <path d="M616 440l66-32v50l-66 32z"/>
                    </g>
                    <path d="M585 462l18-9v64l-18 10z" fill="#b3aa97"/>
                    <path d="M122 403v28M171 426v28M260 480v26M616 465l66-32M640 428v50M662 418v50" stroke="#9a9384" stroke-width="3"/>
                    <path d="M622 455l18-16v20zM645 440l14 6-12 16z" fill="#7c7260"/>

                    <!-- Ring beam -->
                    <g fill="none" stroke="#7b8085" stroke-width="11">
                        <path d="M93 275L460 78l205 97-82 42 110 63-203 105-90-42"/>
                        <path d="M93 275l203 97 150-80"/>
                        <path d="M262 190l310 140M215 330l165-88 130-72M510 180l82-44M550 200l64-36M583 217l-75-37"/>
                        <path d="M400 340l75-42M440 362l70-38M445 322l90 42M300 378l70-35"/>
                    </g>
                    <path d="M93 281l203 97 150-80M400 348l90 42 203-105" fill="none" stroke="#64696d" stroke-width="2"/>
                </g>

                <!-- Trusses -->
                <g transform="translate(300 285) scale(.3333)" fill="none" stroke="#cf9f56" stroke-width="6">
                    <path d="M187 114l108 9 90 93M187 122l198 102M187 112v12M220 117v22M250 120l-8 25M250 120l22 38M295 123l-25 34M295 123l0 45M295 123l38 62M325 155v30M345 177l-10 12M350 180l10 28" />
                    <path d="M274 67l103 7 95 85M274 75l198 100M274 64v12M305 70v20M335 73l-10 22M335 73l22 38M377 74l-25 34M377 74v50M377 74l38 62M408 103v32M430 123l-10 20M440 130l10 30"/>
                    <path d="M360 18l105 10 122 90M360 26l210 100M393 22v20M425 25l-10 22M425 25l20 38M465 28l-25 34M465 28v45M465 28l40 60M495 50v40M520 68l-10 25M530 75l15 38"/>
                    <path d="M385 222l100-95 100-10M385 230l203-112M410 198v14M435 175v25M435 175l20 15M485 127l-25 55M485 127v45M485 127l30 28M520 124l0 30M520 124l28 15"/>
                </g>
            </svg>
        </section>

        <!-- Default tray -->
        <aside class="tray">
            <div class="tray-title"><h2>Bandeja predeterminada</h2><button class="pin" aria-label="Fijar"></button><button class="close" aria-label="Cerrar">×</button></div>
            <div class="tray-body">
                <div class="tray-content">
                    <div class="background-panel">
                        <span>Fondo</span><button class="swatch white" aria-label="Color de fondo"></button><span></span>
                        <label><input type="checkbox">Cielo</label><button class="swatch sky" aria-label="Color de cielo"></button><span></span>
                        <label><input type="checkbox">Suelo</label><button class="swatch ground" aria-label="Color de suelo"></button>
                        <label class="transparency">Transparencia<input type="range" disabled></label>
                        <label class="wide"><input type="checkbox" checked disabled>Mostrar suelo desde abajo</label>
                    </div>

                    <section class="tags">
                        <div class="panel-title"><h3>▼ <span>Etiquetas</span></h3><button aria-label="Cerrar etiquetas">×</button></div>
                        <div class="tag-search">
                            <button aria-label="Añadir etiqueta"><svg viewBox="0 0 10 10"><circle cx="5" cy="5" r="3.800"/><path d="M5 3v4M3 5h4"/></svg></button>
                            <button aria-label="Añadir carpeta"><svg viewBox="0 0 12 10"><path d="M6 8.500H.5V1h3l1 1.500h6V5"/><circle cx="9" cy="7" r="2.300"/><path d="M9 6v2M8 7h2"/></svg></button>
                            <input type="text" placeholder="Buscar" aria-label="Buscar">
                            <button aria-label="Detalles"><svg viewBox="0 0 10 10"><path d="M1 2h4V0l5 5-5 5V8H1z" fill="#222" stroke="none"/><path d="M2.500 3v4" stroke="#7ab"/></svg></button>
                        </div>
                        <div class="tag-list">
                            <table>
                                <thead><tr><th></th><th>No... <svg><use href="#chevron"/></svg></th><th></th><th>Guiones</th><th></th></tr></thead>
                                <tbody id="tagRows"></tbody>
                            </table>
                            <div class="list-scroll"><i></i></div>
                        </div>
                    </section>

                    <section class="shadows">
                        <div class="panel-title"><h3>▼ <span>Sombras</span></h3><button aria-label="Cerrar sombras">×</button></div>
                        <div class="zone">
                            <button aria-label="Mostrar sombras"><svg viewBox="0 0 12 12"><path d="M1 4l6-3 4 5-5 4z" fill="#fff" stroke="#222"/><path d="M1 4l5 6 5-3v2l-5 3-4-4z" fill="#222"/></svg></button>
                            <div class="zone-select"><select aria-label="Zona horaria"><option>UTC+01:00</option></select><svg><use href="#chevron"/></svg></div>
                            <button aria-label="Detalles de sombras"><svg viewBox="0 0 8 10"><path d="M0 0h8v6H0zM3 6h2v2H3zM1 8h6v1.500H1z" fill="#111"/><path d="M2 2h4v2H2z" fill="#ddd"/></svg></button>
                        </div>
                        <div class="shadow-row">
                            <label for="hour">Hora</label>
                            <div class="slider"><input id="hour" class="day" type="range" value="62"><div class="ticks"><span>07:35 AM</span><span>Mediodía</span><span>05:33 PM</span></div></div>
                            <div class="field"><input type="text" value="13:30" aria-label="Hora exacta"><button aria-label="Cambiar hora"><svg viewBox="0 0 6 10"><path d="M3 1l2 3H1zM3 9l2-3H1z" fill="#222"/></svg></button></div>
                        </div>
                        <div class="shadow-row">
                            <label for="date">Fecha</label>
                            <div class="slider"><input id="date" class="year" type="range" value="86"><div class="ticks months"><span>E</span><span>F</span><span>M</span><span>A</span><span>M</span><span>J</span><span>J</span><span>A</span><span>S</span><span>O</span><span>N</span><span>D</span></div></div>
                            <div class="field"><input type="text" value="11/08" aria-label="Fecha exacta"><button class="calendar" aria-label="Calendario"></button></div>
                        </div>
                    </section>
                </div>
                <div class="tray-scroll"><i></i></div>
            </div>
        </aside>
    </main>

    <!-- Status bar -->
    <footer class="status">
        <p>Haz clic o arrastra para seleccionar objetos. Mayúsculas = Añadir/Sustraer. Ctrl = Añadir. Mayúsculas + Ctrl = Sustraer.</p>
        <label>Medidas<input type="text"></label>
    </footer>

    <!-- Floating tool palette -->
    <div class="palette">
        <div class="palette-title"><b>Conjunt...</b><button class="close" aria-label="Cerrar">×</button></div>
        <div class="tools" data-tools="select* group bucket eraser | pencil freehand rect rotrect circle polygon arc arc2 arc3 pie | move push rotate follow scale offset | tape dim protractor text axes text3d | orbit pan zoom zoomwin extents prev | camera look walk section | geo1 geo2 geo3 geo4"></div>
    </div>

    <script src="script.js"></script>
</body>
</html>
```

FILE: styles.css
```css
* {
    box-sizing: border-box;
}
body {
    margin: 0;
    height: 100vh;
    display: flex;
    flex-direction: column;
    overflow: hidden;
    position: relative;
    background-color: #fff;
    border-bottom: 1px solid #25262b;
    font-family: "Open Sans", "Noto Sans", sans-serif;
    font-size: 7px;
    color: #222;
}
h1, h2, h3, p {
    margin: 0;
    font-size: inherit;
    font-weight: normal;
}
button {
    padding: 0;
    border: none;
    background: none;
    color: inherit;
    font: inherit;
}
input, select {
    margin: 0;
    font: inherit;
    color: inherit;
}
select {
    appearance: none;
    border: none;
    background: none;
    padding: 0;
    flex: 1;
    min-width: 0;
}
svg {
    display: block;
}
.sprite {
    position: absolute;
    width: 0;
    height: 0;
}

/* Title bar and menu */
.titlebar {
    display: flex;
    align-items: center;
    height: 14px;
    padding-left: 2px;
    gap: 2px;
}
.logo {
    width: 9px;
    height: 9px;
}
.window-buttons {
    display: flex;
    margin-left: auto;
}
.window-buttons button {
    width: 29px;
    height: 14px;
    display: flex;
    justify-content: center;
    align-items: center;
}
.window-buttons svg {
    width: 7px;
    height: 7px;
    fill: none;
    stroke: #333;
}
.menu {
    display: flex;
    align-items: center;
    gap: 9px;
    height: 12px;
    padding-left: 5px;
}
.menu a {
    color: inherit;
    text-decoration: none;
}

/* Toolbars */
.toolbars {
    overflow: hidden;
    background-color: #f0f0f0;
    border-bottom: 1px solid #777;
}
.toolbar {
    display: flex;
    align-items: center;
    height: 24px;
    padding-left: 5px;
    border-bottom: 1px solid #d2d2d2;
}
.toolbar-short {
    width: fit-content;
    height: 23px;
    padding-right: 1px;
    border-right: 1px solid #c8c8c8;
}
.tools {
    display: flex;
    flex: none;
}
.tool {
    position: relative;
    flex: none;
    width: 21px;
    height: 21px;
    display: flex;
    align-items: center;
    justify-content: center;
}
.tool svg {
    width: 14px;
    height: 14px;
}
.tool .big {
    width: 16px;
    height: 16px;
}
.tool.active {
    background-color: #cce6fa;
}
.tool .letter {
    position: absolute;
    top: 0;
    right: 0;
    font: bold 7px "Liberation Mono", monospace;
}
.separator {
    flex: none;
    width: 4px;
    border-left: 1px solid #b9b9b9;
}
.separator.double {
    width: 6px;
    border-left: 1px solid #cfcfcf;
    border-right: 1px solid #fff;
}
.pad-brown { color: #8c7650; }
.pad-black { color: #333; }
.pad-blue { color: #1432e0; }
.pad-red { color: #e03c34; }
.pad-green { color: #28dc32; }
.pad-orange { color: #f08018; }
.pad-magenta { color: #ee22e0; }
.pad-brown .letter { color: #222; }
.tag-select {
    display: flex;
    align-items: center;
    flex: none;
    width: 80px;
    height: 17px;
    margin-left: 1px;
    background-color: #fff;
    border: 1px solid #e6e6e6;
}
.tag-select svg {
    width: 6px;
    height: 6px;
    margin: 0 4px 0 3px;
}
.tag-select .arrow {
    width: 7px;
    height: 15px;
    margin: 0;
    color: #777;
    border-left: 1px solid #e0e0e0;
}

/* Model view */
.workspace {
    flex: 1;
    min-height: 0;
    display: grid;
    grid-template-columns: 1fr 162px;
}
.viewport {
    min-height: 0;
    overflow: hidden;
}
.viewport svg {
    width: 100%;
    height: 100%;
}

/* Tray */
.tray {
    display: flex;
    flex-direction: column;
    min-width: 0;
    min-height: 0;
    background-color: #f0f0f0;
    border-left: 2px solid #e2e2e2;
    font-size: 6px;
}
.tray-title {
    display: flex;
    align-items: center;
    gap: 4px;
    height: 12px;
    padding: 0 2px;
    background-image: linear-gradient(#bccbdd, #d8e3ef);
}
.tray-title h2 {
    margin-right: auto;
}
.pin {
    width: 3px;
    height: 5px;
    background-color: #222;
}
.close {
    width: 6px;
    height: 7px;
    background-color: #d9505a;
    color: #fff;
    font-size: 6px;
    line-height: 6px;
}
.tray-body {
    flex: 1;
    min-height: 0;
    display: grid;
    grid-template-columns: minmax(0, 1fr) 11px;
}
.tray-content {
    display: flex;
    flex-direction: column;
    min-height: 0;
}
.background-panel {
    flex: 1;
    display: grid;
    grid-template-columns: 38px 18px 1fr;
    grid-auto-rows: 17px;
    align-items: center;
    padding: 4px 6px;
}
.background-panel label {
    display: flex;
    align-items: center;
    gap: 2px;
}
.background-panel input[type="checkbox"] {
    width: 8px;
    height: 8px;
}
.background-panel .wide {
    grid-column: 1 / -1;
    height: 14px;
    color: #888;
    align-self: start;
}
.background-panel .transparency {
    flex-direction: column;
    align-items: flex-start;
    gap: 0;
    margin-left: 10px;
    color: #aaa;
}
.transparency input {
    appearance: none;
    width: 38px;
    height: 9px;
    background: linear-gradient(#ddd, #ddd) center / 100% 1px no-repeat;
}
.transparency input::-webkit-slider-thumb {
    appearance: none;
    width: 4px;
    height: 9px;
    background-color: #c4c4c4;
}
.swatch {
    width: 13px;
    height: 14px;
    margin-left: 2px;
    border: 1px solid #aaa;
}
.white { background-color: #fff; }
.sky { background-color: #c3cbd0; }
.ground { background-color: #cfccae; }
.tray-scroll {
    padding: 61px 3px 0 4px;
}
.tray-scroll i {
    display: block;
    height: 11px;
    background-color: #777;
}
.panel-title {
    display: flex;
    align-items: center;
    justify-content: space-between;
    height: 12px;
    padding: 0 2px 0 3px;
    background-image: linear-gradient(#e4e4e4, #c6c6c6);
    border: 1px solid #d6d6d6;
    font-size: 7px;
}
.panel-title button {
    width: 7px;
    height: 7px;
    background-color: #fff;
    font-size: 7px;
    font-weight: bold;
    line-height: 6px;
}

/* Tags panel */
.tag-search {
    display: flex;
    align-items: center;
    height: 17px;
    padding: 0 3px;
    gap: 3px;
}
.tag-search svg {
    width: 11px;
    height: 10px;
    fill: none;
    stroke: #555;
    stroke-width: .8;
}
.tag-search input {
    flex: 1;
    min-width: 0;
    height: 11px;
    margin-right: 5px;
    padding: 0 2px;
    border: none;
    background-color: #fff;
}
.tag-list {
    display: grid;
    grid-template-columns: minmax(0, 1fr) 10px;
    height: 110px;
    margin-bottom: 3px;
    overflow: hidden;
    border-bottom: 1px solid #ccc;
}
table {
    width: 100%;
    height: 0;
    table-layout: fixed;
    border-collapse: collapse;
    background-color: #fff;
}
th, td {
    height: 11px;
    padding: 0 0 0 2px;
    text-align: left;
    font-weight: normal;
    line-height: 9px;
    white-space: nowrap;
}
th {
    height: 15px;
    background-color: #f2f2f2;
    border-right: 1px solid #d4d4d4;
}
th:first-child {
    width: 19px;
}
th:nth-child(2) {
    width: 32px;
}
th:nth-child(3) {
    width: 21px;
}
th:nth-child(4) {
    width: 47px;
}
th svg {
    display: inline-block;
    width: 8px;
    height: 6px;
    vertical-align: middle;
}
td:first-child {
    padding-left: 6px;
}
td svg {
    width: 8px;
    height: 6px;
}
td:nth-child(3) {
    padding: 0 5px 0 6px;
}
.color {
    display: block;
    height: 10px;
}
tr.selected {
    background-color: #0a74d0;
    color: #fff;
}
tr.dimmed {
    color: #bbb;
}
.magenta { background-color: #ff00c8; }
.teal { background-color: #0b9c86; }
.silver { background-color: #d3d3d6; }
.slate { background-color: #777a9a; }
.rust { background-color: #c96a08; }
.amber { background-color: #ffb000; }
.brown { background-color: #5e4400; }
.list-scroll {
    padding: 28px 3px 0;
}
.list-scroll i {
    display: block;
    height: 10px;
    background-color: #8a8a8a;
}

/* Shadows panel */
.shadows {
    padding-bottom: 8px;
}
.zone, .shadow-row {
    display: flex;
    align-items: center;
    height: 17px;
    padding: 0 2px;
}
.zone button svg {
    width: 11px;
    height: 11px;
}
.zone button:first-child {
    margin: 0 8px 0 4px;
}
.zone button:last-child {
    margin: 0 2px 0 auto;
}
.zone button:last-child svg {
    width: 8px;
    height: 9px;
}
.zone-select {
    display: flex;
    align-items: center;
    width: 64px;
    height: 11px;
    padding-left: 2px;
    border: 1px solid #ddd;
    background-color: #fff;
}
.zone-select svg {
    width: 8px;
    height: 6px;
    color: #888;
}
.shadow-row:last-child {
    height: 22px;
    padding-bottom: 5px;
    border-bottom: 1px solid #ccc;
}
.shadow-row label {
    width: 26px;
}
.slider {
    width: 71px;
    margin-right: 9px;
}
.slider input {
    appearance: none;
    display: block;
    width: 100%;
    height: 5px;
}
.slider input::-webkit-slider-thumb {
    appearance: none;
    width: 2px;
    height: 6px;
    background-color: #fff;
    border: 1px solid #99b;
}
.day {
    background: linear-gradient(90deg, #d4e0ea, #6f98dc 60%, #3548a8 75%, #10103a) center / 100% 3px no-repeat;
}
.year {
    background: linear-gradient(90deg, #f6eeb8, #ecb14c 45%, #e24a38 80%, #f0c8c8) center / 100% 3px no-repeat;
}
.ticks {
    display: flex;
    justify-content: center;
    margin: 0 -2px;
    font: 6px/7px "Liberation Sans", sans-serif;
    white-space: nowrap;
}
.ticks span + span {
    margin-left: -2px;
}
.ticks.months {
    justify-content: space-between;
    margin: 0 3px;
}
.ticks.months span {
    margin: 0;
}
.field {
    display: flex;
    align-items: center;
    flex: 1;
    min-width: 0;
    height: 13px;
    border: 1px solid #ccc;
    background-color: #fff;
}
.field input {
    flex: 1;
    min-width: 0;
    padding: 0 1px;
    border: none;
    background: none;
}
.field button {
    width: 10px;
    height: 11px;
    background-color: #eee;
}
.field button svg {
    width: 10px;
    height: 10px;
}
.field .calendar {
    width: 8px;
    height: 8px;
    margin-right: 1px;
    border: 1px solid #999;
    border-radius: 1px;
    background-color: #ddd;
}

/* Status bar */
.status {
    flex: none;
    display: flex;
    align-items: center;
    justify-content: space-between;
    height: 13px;
    padding-left: 42px;
    background-color: #f0f0f0;
    font-family: Roboto, "Open Sans", sans-serif;
    font-size: 8px;
}
.status label {
    display: flex;
    align-items: center;
    gap: 5px;
    width: 161px;
}
.status input {
    flex: 1;
    min-width: 0;
    height: 11px;
    margin-right: 2px;
    border: 1px solid #ddd;
    background-color: #f4f4f4;
}

/* Floating palette */
.palette {
    position: absolute;
    top: 78px;
    bottom: 0;
    left: 1px;
    width: 45px;
    background-color: #f0f0f0;
    border: 1px solid #9ab4cc;
    border-right-color: #68727c;
    overflow: hidden;
}
.palette-title {
    display: flex;
    align-items: center;
    justify-content: space-between;
    height: 15px;
    padding: 0 2px 0 0;
    background-color: #9fb6d2;
    font-size: 6px;
}
.palette .tools {
    flex-wrap: wrap;
    width: 43px;
}
.palette .separator {
    width: 40px;
    height: 1px;
    margin: 2px 1px 1px;
    border: none;
    background-color: #c2c2c2;
}
```

FILE: script.js
```js
// Icons drawn slightly larger than the rest
const bigIcons = ['wh', 'sync', 'send', 'plus', 'tree', 'fan', 'ball', 'cloud', 'gear', 'group', 'pad', 'padcog', 'geo1', 'geo2', 'geo3', 'geo4'];

// Toolbars: "|" is a separator, "*" marks a pressed tool, "icon:color:letter" adds a tint
document.querySelectorAll('[data-tools]').forEach(bar => {
    bar.dataset.tools.split(' ').forEach(token => {
        if (token[0] === '|') {
            const line = document.createElement('span');
            line.className = token === '||' ? 'separator double' : 'separator';
            bar.appendChild(line);
            return;
        }
        const [icon, color, letter] = token.replace('*', '').split(':');
        const button = document.createElement('button');
        button.className = 'tool' + (token.endsWith('*') ? ' active' : '') + (color ? ' pad-' + color : '');
        button.setAttribute('aria-label', icon + (letter || ''));
        button.innerHTML = `<svg class="${bigIcons.includes(icon) ? 'big' : ''}"><use href="#${icon}"/></svg>`;
        if (letter) button.innerHTML += `<span class="letter">${letter}</span>`;
        bar.appendChild(button);
    });
});

// Tags list
const tags = [
    ['Viga circ...', 'magenta'],
    ['Tree', 'teal', 'selected'],
    ['Traffico', 'silver'],
    ['Servicio c.', 'slate'],
    ['PUERTAS', 'teal'],
    ['Porto', 'rust', 'dimmed'],
    ['Pipol', 'teal'],
    ['Pilotes', 'amber'],
    ['PAREDES', 'brown']
];
document.getElementById('tagRows').innerHTML = tags.map(([name, color, state]) => `
    <tr class="${state || ''}">
        <td><svg><use href="#${state ? 'eye-off' : 'eye'}"/></svg></td>
        <td>${name}</td>
        <td><span class="color ${color}"></span></td>
        <td>Por defecto</td>
        <td></td>
    </tr>`).join('');
```
